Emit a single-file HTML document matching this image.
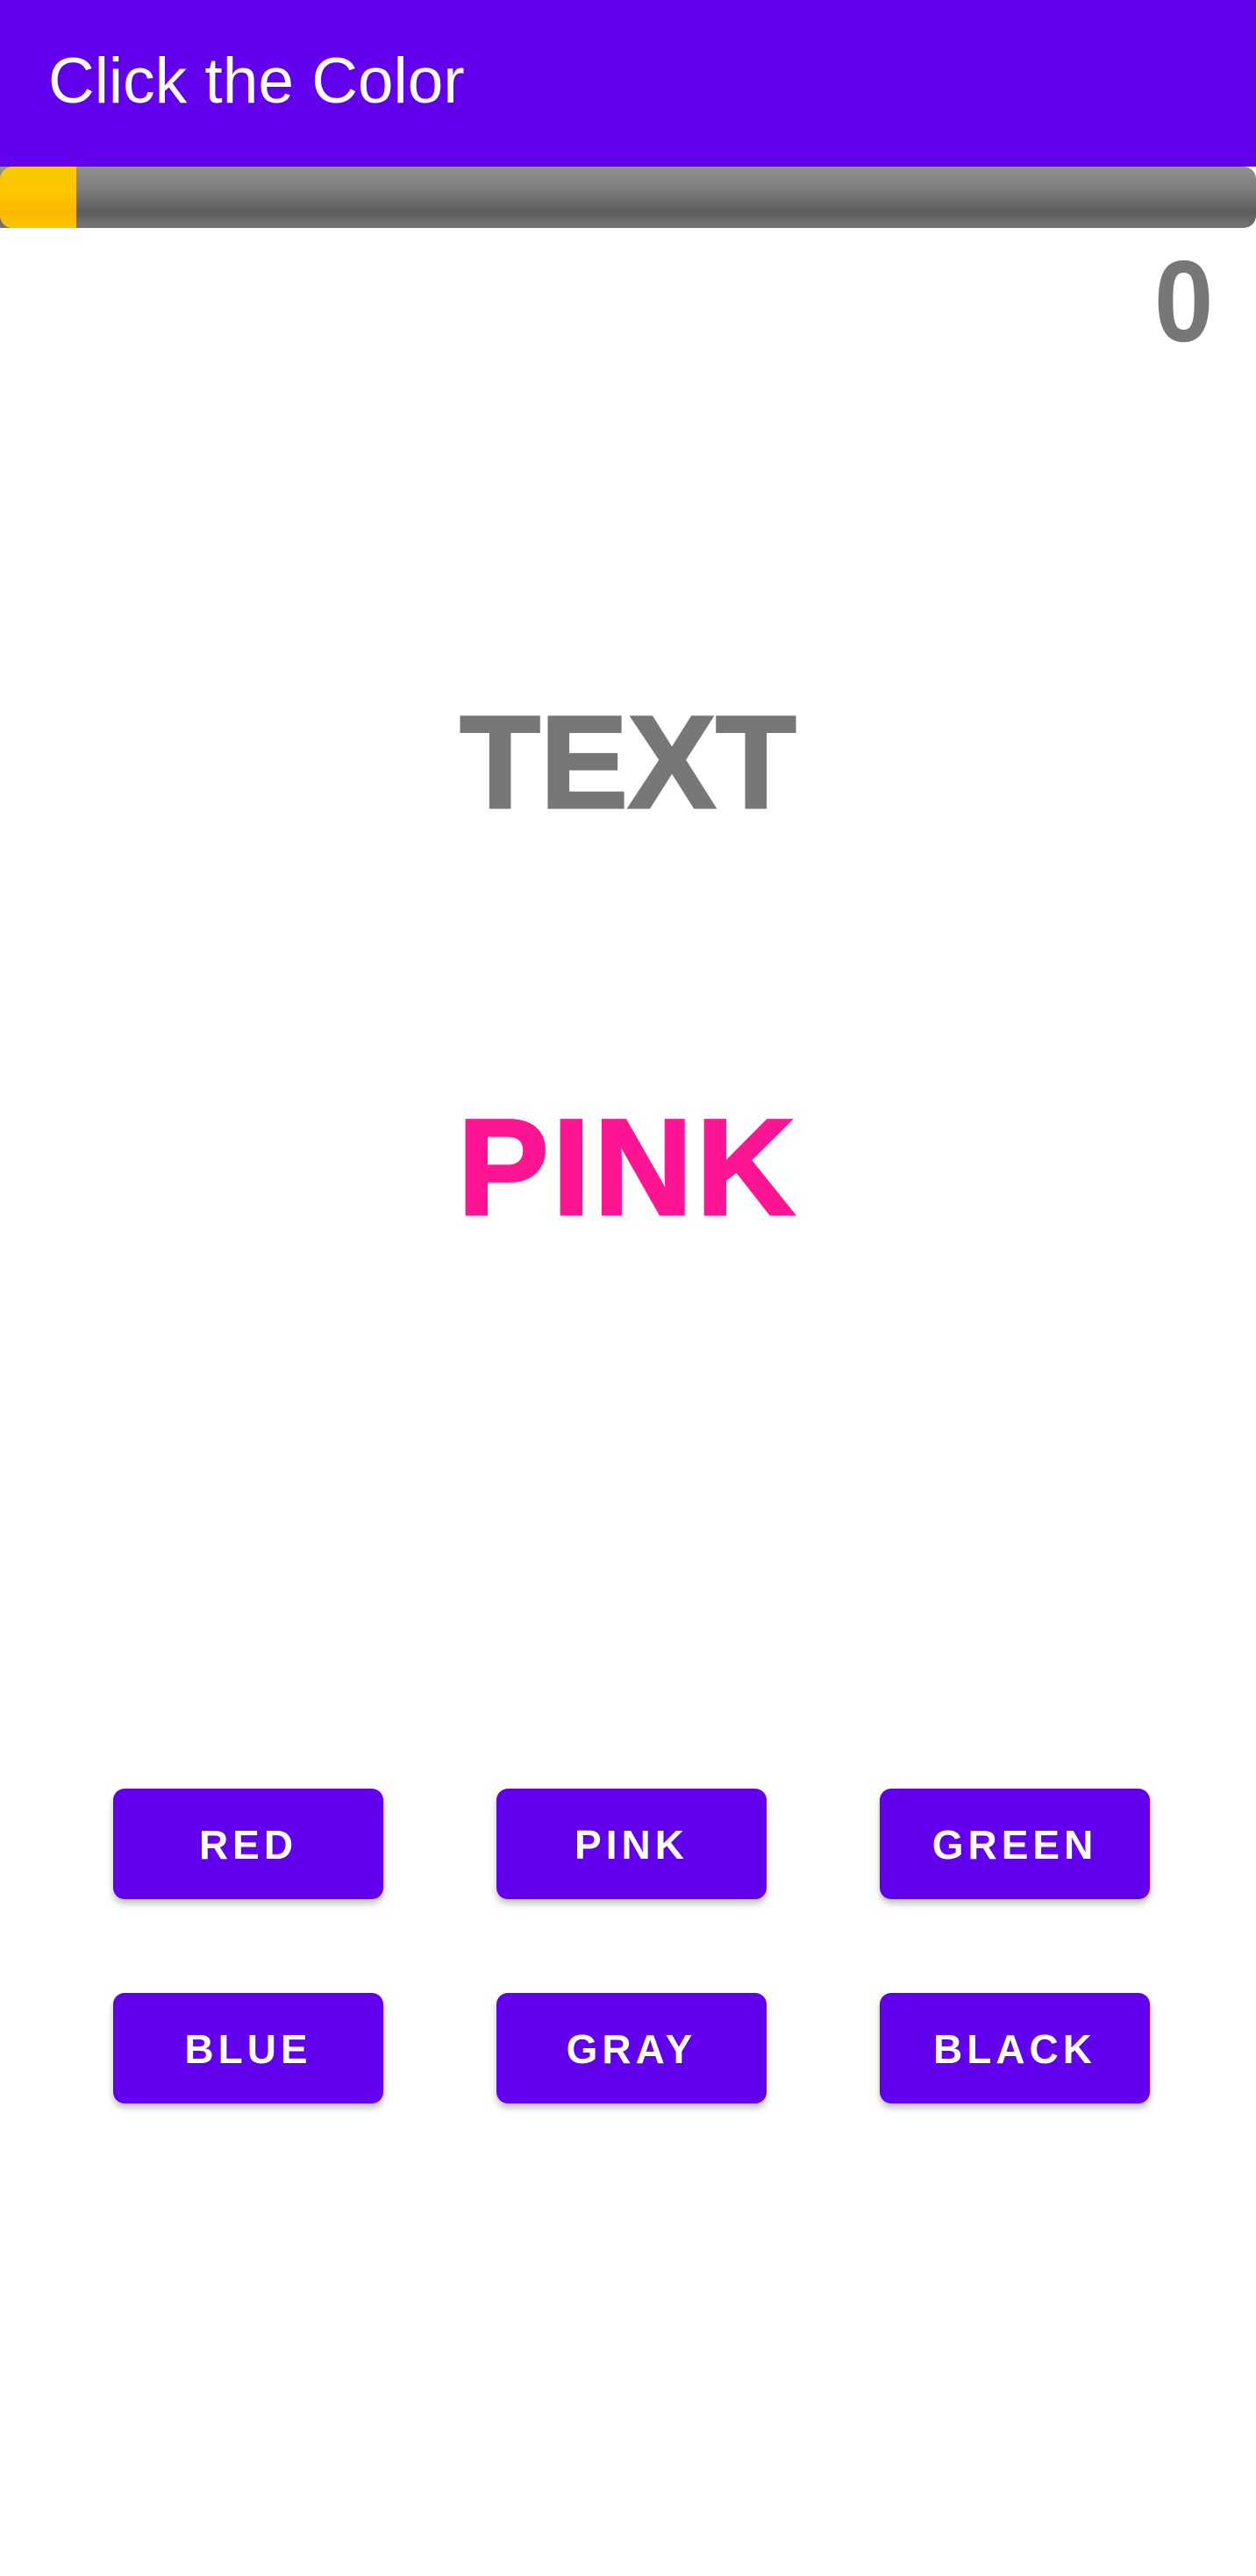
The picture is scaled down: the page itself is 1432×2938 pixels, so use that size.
<!DOCTYPE html>
<html><head><meta charset="utf-8"><style>
html,body{margin:0;padding:0;width:1432px;height:2938px;background:#fff;overflow:hidden;font-family:"Liberation Sans",sans-serif;position:relative}
.bar{position:absolute;left:0;top:0;width:1432px;height:190px;background:#6200EE}
.title{position:absolute;left:55px;top:53px;font-size:73px;color:#fff;line-height:80px}
.prog{position:absolute;left:0;top:190px;width:1432px;height:70px;background:linear-gradient(#929292,#7a7c79 40%,#5d5e5c 75%,#767775);border-radius:0 14px 14px 0}
.fill{position:absolute;left:0;top:190px;width:87px;height:70px;background:linear-gradient(#f6c800,#ffc600 40%,#fbb800 75%,#ffc600);border-radius:14px 0 0 14px}
.score{position:absolute;right:49px;top:278px;font-size:132px;font-weight:bold;color:#777;line-height:132px;transform:scaleX(0.92);transform-origin:right}
.big{position:absolute;left:0;width:1432px;text-align:center;font-weight:bold;line-height:1}
.btn{position:absolute;width:308px;height:126px;background:#6200EE;border-radius:13px;color:#fff;font-size:46px;font-weight:bold;letter-spacing:5px;text-align:center;line-height:128px;box-shadow:0 5px 8px rgba(0,0,0,.25)}
</style></head><body>
<div class="bar"></div>
<div class="title">Click the Color</div>
<div class="prog"></div>
<div class="fill"></div>
<div class="score">0</div>
<div class="big" style="top:794px;font-size:150px;color:#777;letter-spacing:0;-webkit-text-stroke:3px #777">TEXT</div>
<div class="big" style="top:1254px;font-size:156px;color:#FF1493;letter-spacing:4px;-webkit-text-stroke:3px #FF1493">PINK</div>
<div class="btn" style="left:129px;top:2040px">RED</div>
<div class="btn" style="left:566px;top:2040px">PINK</div>
<div class="btn" style="left:1003px;top:2040px">GREEN</div>
<div class="btn" style="left:129px;top:2273px">BLUE</div>
<div class="btn" style="left:566px;top:2273px">GRAY</div>
<div class="btn" style="left:1003px;top:2273px">BLACK</div>
</body></html>
